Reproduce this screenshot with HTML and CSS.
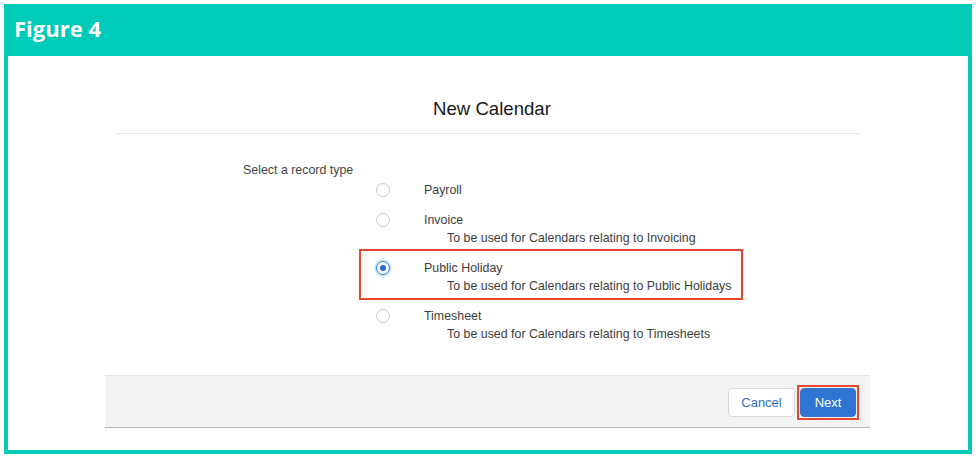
FILE: index.html
```html
<!DOCTYPE html>
<html lang="en">
<head>
    <meta charset="UTF-8">
    <meta name="viewport" content="width=device-width, initial-scale=1.0">
    <title>Figure 4 - New Calendar</title>
    <link rel="stylesheet" href="styles.css">
</head>
<body>
    <div class="frame">
        <div class="frame-head">Figure 4</div>
        <div class="frame-body">
            <div class="modal">
                <div class="modal-head">
                    <h2>New Calendar</h2>
                </div>
                <div class="modal-body">
                    <div class="field-label">Select a record type</div>
                    <div class="options">
                        <div class="option">
                            <span class="radio"></span>
                            <div class="option-text">
                                <div class="option-name">Payroll</div>
                            </div>
                        </div>
                        <div class="option">
                            <span class="radio"></span>
                            <div class="option-text">
                                <div class="option-name">Invoice</div>
                                <div class="option-desc">To be used for Calendars relating to Invoicing</div>
                            </div>
                        </div>
                        <div class="option highlight">
                            <span class="radio checked"></span>
                            <div class="option-text">
                                <div class="option-name">Public Holiday</div>
                                <div class="option-desc">To be used for Calendars relating to Public Holidays</div>
                            </div>
                        </div>
                        <div class="option">
                            <span class="radio"></span>
                            <div class="option-text">
                                <div class="option-name">Timesheet</div>
                                <div class="option-desc">To be used for Calendars relating to Timesheets</div>
                            </div>
                        </div>
                    </div>
                </div>
                <div class="modal-foot">
                    <button class="btn btn-neutral">Cancel</button>
                    <button class="btn btn-brand marked">Next</button>
                </div>
            </div>
        </div>
    </div>
</body>
</html>
```

FILE: styles.css
```css
body {
    margin: 0;
    padding: 4px;
    background: #fff;
    font-family: 'Liberation Sans', Arial, sans-serif;
    color: #3e3e3c;
}
.frame {
    width: 968px;
    height: 450px;
    box-sizing: border-box;
    background: #00cbb9;
    padding: 0 4px 4px;
    display: flex;
    flex-direction: column;
}
.frame-head {
    height: 52px;
    box-sizing: border-box;
    padding: 10px 0 0 6px;
    font-family: 'Open Sans', sans-serif;
    font-weight: 700;
    font-size: 22px;
    line-height: 28px;
    color: #fff;
}
.frame-body {
    flex: 1;
    background: #fff;
    padding: 17px 0 0 97px;
}
.modal {
    width: 765px;
}
.modal-head {
    margin: 0 10px 0 11px;
    padding: 25px 0 13px 8px;
    border-bottom: 1px solid #e5e5e5;
    text-align: center;
}
.modal-head h2 {
    margin: 0;
    font-size: 18.6px;
    line-height: 22px;
    font-weight: normal;
    color: #181818;
}
.modal-body {
    padding: 27px 0 32px 138px;
    font-size: 12.4px;
    line-height: 18px;
}
.field-label {
    color: #444;
}
.options {
    margin: 2px 0 0 133px;
}
.option {
    display: flex;
    align-items: flex-start;
    margin-bottom: 12px;
}
.option:last-child {
    margin-bottom: 0;
}
.radio {
    width: 14px;
    height: 14px;
    box-sizing: border-box;
    border: 1px solid #c9c9c9;
    border-radius: 50%;
    margin: 2px 34px 0 0;
    flex-shrink: 0;
    display: flex;
    align-items: center;
    justify-content: center;
}
.radio.checked {
    border-color: #2a7de1;
    box-shadow: 0 0 2px 1px rgba(27, 150, 255, 0.45);
}
.radio.checked::after {
    content: '';
    width: 6px;
    height: 6px;
    border-radius: 50%;
    background: #1f6ed4;
}
.option-name {
    color: #3e3e3c;
}
.option-desc {
    padding-left: 23px;
    color: #3e3e3c;
}
.highlight {
    position: relative;
}
.highlight::after {
    content: '';
    position: absolute;
    top: -10px;
    left: -17px;
    width: 384px;
    height: 51px;
    box-sizing: border-box;
    border: 2px solid #e8472f;
}
.modal-foot {
    background: #f3f3f3;
    border-top: 1px solid #e5e5e5;
    border-bottom: 1px solid #b5b5b5;
    padding: 12px 14px 10px;
    display: flex;
    justify-content: flex-end;
    gap: 5px;
}
.btn {
    height: 29px;
    box-sizing: border-box;
    border-radius: 4px;
    font-family: 'Liberation Sans', Arial, sans-serif;
    font-size: 13px;
    padding: 0;
    cursor: pointer;
}
.btn-neutral {
    width: 67px;
    background: #fff;
    border: 1px solid #d8d8d8;
    color: #2e72cf;
}
.btn-brand {
    width: 56px;
    background: #2f74d0;
    border: 1px solid #2f74d0;
    color: #fff;
}
.marked {
    position: relative;
}
.marked::after {
    content: '';
    position: absolute;
    top: -4px;
    left: -4px;
    right: -4px;
    bottom: -4px;
    border: 2px solid #e8472f;
}
```
